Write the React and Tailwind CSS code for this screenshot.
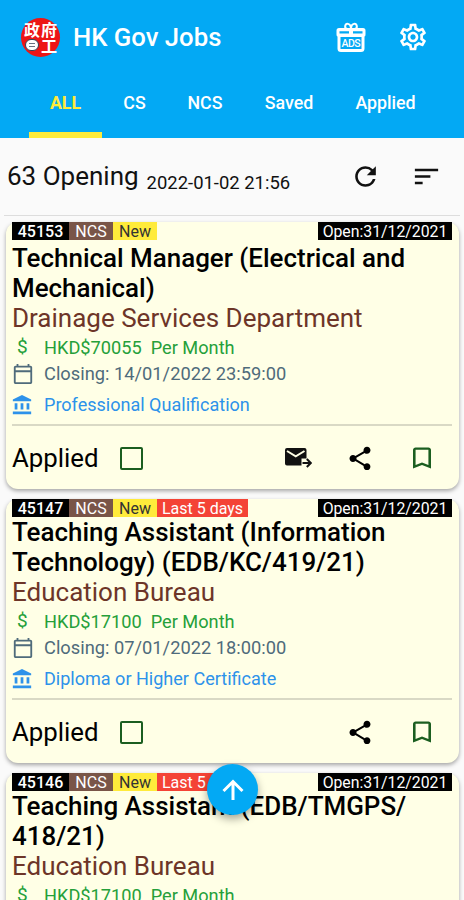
import {
  MdAccountBalance,
  MdBookmarkBorder,
  MdOutlineCalendarToday,
  MdOutlineSettings,
  MdRefresh,
  MdShare,
  MdSort,
} from "react-icons/md";

const tabs = [
  { label: "ALL", width: "w-[73px]", active: true },
  { label: "CS", width: "w-[65px]" },
  { label: "NCS", width: "w-[76px]" },
  { label: "Saved", width: "w-[92px]" },
  { label: "Applied", width: "w-[101px]" },
];

const jobs = [
  {
    id: "45153",
    title: ["Technical Manager (Electrical and", "Mechanical)"],
    department: "Drainage Services Department",
    salary: "HKD$70055",
    closing: "14/01/2022 23:59:00",
    education: "Professional Qualification",
    canMail: true,
  },
  {
    id: "45147",
    title: ["Teaching Assistant (Information", "Technology) (EDB/KC/419/21)"],
    department: "Education Bureau",
    salary: "HKD$17100",
    closing: "07/01/2022 18:00:00",
    education: "Diploma or Higher Certificate",
    lastDays: true,
  },
  {
    id: "45146",
    title: ["Teaching Assistant (EDB/TMGPS/", "418/21)"],
    department: "Education Bureau",
    salary: "HKD$17100",
    closing: "07/01/2022 18:00:00",
    education: "Diploma or Higher Certificate",
    lastDays: true,
  },
];

const Logo = () => (
  <div className="grid h-[39px] w-[39px] grid-cols-[17px_17px] content-center justify-center rounded-full bg-[#ed1515] text-center font-['Noto_Sans_CJK_TC',sans-serif] text-[16px] leading-[16px] font-bold text-white">
    <span>政</span>
    <span>府</span>
    <span className="m-auto flex h-[12px] w-[14px] items-center justify-center rounded-full border border-gray-700 bg-white">
      <span className="h-[4px] w-[6px] border-y border-gray-500" />
    </span>
    <span>工</span>
  </div>
);

const GiftIcon = () => (
  <svg width="30" height="32" viewBox="0 0 30 32">
    {/* bow */}
    <path
      d="M15 7C13.500 9 8.500 8.500 9.200 5C9.900 1.800 14 2 15 6.500C16 2 20.100 1.800 20.800 5C21.500 8.500 16.500 9 15 7Z"
      fill="none"
      stroke="white"
      strokeWidth="2"
    />
    {/* lid and box */}
    <path
      d="M3 7H27Q29.500 7 29.500 9.500V13.500Q29.500 15.500 28.500 15.500V27.500Q28.500 31 25 31H5Q1.500 31 1.500 27.500V15.500Q0.500 15.500 0.500 13.500V9.500Q0.500 7 3 7Z"
      fill="white"
    />
    <path d="M3.500 10.300H13V12.500H3.500ZM17 10.300H26.500V12.500H17ZM4.500 16H25.500V28H4.500Z" fill="#03a9f4" />
    <text
      x="15"
      y="25.800"
      textAnchor="middle"
      textLength="19"
      fill="white"
      fontSize="10.500"
      fontFamily="Roboto"
      fontWeight="500"
    >
      ADS
    </text>
  </svg>
);

// filled envelope with a small arrow at the bottom right
const MailIcon = () => (
  <svg width="28" height="24" viewBox="0 0 28 24" fill="none">
    <path d="M3 2H20.500Q22.500 2 22.500 4V12.500H17.500V19.500H3Q1 19.500 1 17.500V4Q1 2 3 2Z" fill="#111" />
    <path d="M3 5L11.750 10.300L20.500 5" stroke="#ffffe6" strokeWidth="2" />
    <path d="M18.500 17H26.500M22.800 13L26.800 17L22.800 21" stroke="#111" strokeWidth="2" />
  </svg>
);

const JobCard = ({ job, first }) => (
  <article
    className={
      first
        ? "h-[267px] shrink-0 rounded-xl bg-[#ffffe6] pr-[7px] pl-[6px] shadow-[0_2px_4px_rgba(0,0,0,0.35)]"
        : "h-[264px] shrink-0 rounded-xl bg-[#ffffe6] pr-[7px] pl-[6px] shadow-[0_2px_4px_rgba(0,0,0,0.35)]"
    }
  >
    {/* BADGES */}
    <div className="flex h-[18px] text-[16px] leading-[19px] whitespace-nowrap">
      <span className="w-[57px] bg-black text-center font-medium text-white">{job.id}</span>
      <span className="w-[44px] bg-[#795548] text-center text-white">NCS</span>
      <span className="w-[44px] bg-[#ffeb3b] text-center text-[#333]">New</span>
      {job.lastDays && (
        <span className="w-[91px] bg-[#f44336] text-center text-white">Last 5 days</span>
      )}
      <span className="ml-auto w-[134px] bg-black text-center text-[15.8px] text-white">
        Open:31/12/2021
      </span>
    </div>

    {/* TITLE */}
    <h2
      className={
        first
          ? "mt-[4px] text-[25.95px] leading-[29.5px] font-medium whitespace-nowrap text-black"
          : "mt-px text-[25.95px] leading-[29.5px] font-medium whitespace-nowrap text-black"
      }
    >
      {job.title.map((line) => (
        <span key={line} className="block">
          {line}
        </span>
      ))}
    </h2>
    <p className="text-[26px] leading-[30px] whitespace-nowrap text-[#6d3528]">
      {job.department}
    </p>

    {/* DETAILS */}
    <div className="flex h-[28px] items-center pt-px text-[18.2px] text-[#25a03a]">
      <span className="w-[32px] pl-[5px] text-[19px]">$</span>
      <span>{job.salary}&nbsp; Per Month</span>
    </div>
    <div className="flex h-[24px] items-center pt-px text-[18.3px] text-[#4f6b7b]">
      <MdOutlineCalendarToday className="mr-[10px] h-[22px] w-[22px]" />
      <span>Closing: {job.closing}</span>
    </div>
    <div className="flex h-[39px] items-center text-[18.05px] text-[#2d92ea]">
      <MdAccountBalance className="mr-[11px] -ml-px h-[22px] w-[22px]" />
      <span>{job.education}</span>
    </div>

    {/* ACTIONS */}
    <div className="flex h-[65px] items-center border-t-2 border-[#d9d9c5] pt-px text-black">
      <span className="text-[25.8px]">Applied</span>
      <span className="ml-[21px] h-[23px] w-[23px] rounded-[2px] border-2 border-[#1b5e20]" />
      <div className="mr-[16px] ml-auto flex items-center gap-[34px]">
        {job.canMail && <MailIcon />}
        <MdShare className="h-[29px] w-[28px]" />
        <MdBookmarkBorder className="h-[30px] w-[28px] scale-x-110 text-[#1b5e20]" />
      </div>
    </div>
  </article>
);

export default function App() {
  return (
    <div className="relative flex h-[900px] w-[464px] flex-col overflow-hidden bg-[#fafafa] font-['Roboto',sans-serif]">
      {/* HEADER */}
      <header className="h-[138px] shrink-0 bg-[#03a9f4] text-white">
        <div className="flex h-[74px] items-center pl-[21px]">
          <Logo />
          <h1 className="ml-[13px] text-[25.7px] font-medium">HK Gov Jobs</h1>
          <div className="mr-[35px] ml-auto flex items-center gap-[31px]">
            <GiftIcon />
            <MdOutlineSettings className="h-[32px] w-[32px]" />
          </div>
        </div>
        <nav className="flex h-[64px] pl-[29px] text-[17.8px] font-medium">
          {tabs.map((tab) => (
            <div key={tab.label} className={`${tab.width} flex flex-col items-center`}>
              <span className={tab.active ? "pt-[16px] font-bold text-[#ffeb3b]" : "pt-[16px]"}>
                {tab.label}
              </span>
              {tab.active && <span className="mt-auto h-[6px] w-full bg-[#ffeb3b]" />}
            </div>
          ))}
        </nav>
      </header>

      {/* SUMMARY */}
      <div className="mx-1 flex h-[78px] shrink-0 items-center border-b border-[#ddd] px-[3px] text-[#111]">
        <span className="text-[26px]">63 Opening</span>
        <span className="mt-[14px] ml-[8px] text-[18.45px]">2022-01-02 21:56</span>
        <MdRefresh className="ml-auto h-[31px] w-[31px]" />
        <MdSort className="mr-[15px] ml-[30px] h-[31px] w-[31px]" />
      </div>

      {/* JOB LIST */}
      <main className="flex flex-col gap-[10px] pt-[6px] pr-[5px] pl-[6px]">
        {jobs.map((job, index) => (
          <JobCard key={job.id} job={job} first={index === 0} />
        ))}
      </main>

      {/* SCROLL TO TOP */}
      <button className="absolute top-[764px] left-[207px] flex h-[51px] w-[51px] items-center justify-center rounded-full bg-[#03a9f4] text-white shadow-[0_4px_8px_rgba(0,0,0,0.35)]">
        <svg width="22" height="22" viewBox="0 0 22 22" fill="none" stroke="white" strokeWidth="3">
          <path d="M11 21V2.500M1.500 12L11 2.500L20.500 12" />
        </svg>
      </button>
    </div>
  );
}
